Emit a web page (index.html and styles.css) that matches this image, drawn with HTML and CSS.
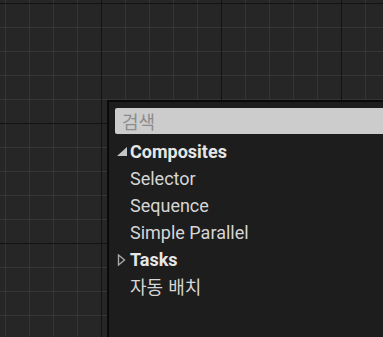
FILE: index.html
```html
<!DOCTYPE html>
<html lang="ko">
<head>
<meta charset="utf-8">
<link rel="stylesheet" href="styles.css">
</head>
<body>
<div class="canvas">
  <div class="menu">
    <div class="search"><span class="placeholder">검색</span></div>
    <ul class="list">
      <li class="row cat">
        <svg class="arrow" width="10" height="10" viewBox="0 0 10 10"><polygon points="10,0 10,9 0,9" fill="#c4c4c4"/></svg>
        <span>Composites</span>
      </li>
      <li class="row item">Selector</li>
      <li class="row item">Sequence</li>
      <li class="row item">Simple Parallel</li>
      <li class="row cat">
        <svg class="arrow" width="10" height="12" viewBox="0 0 10 12"><polygon points="1.5,1 7.5,6 1.5,11" fill="none" stroke="#a8a8a8" stroke-width="1.4"/></svg>
        <span>Tasks</span>
      </li>
      <li class="row item kr">자동 배치</li>
    </ul>
  </div>
</div>
</body>
</html>
```

FILE: styles.css
```css
html, body {
  margin: 0;
  padding: 0;
  width: 383px;
  height: 337px;
  overflow: hidden;
}

.canvas {
  position: relative;
  width: 383px;
  height: 337px;
  overflow: hidden;
  background-color: #262626;
  background-image:
    linear-gradient(to right, #131313 0, #131313 1px, transparent 1px),
    linear-gradient(to bottom, #131313 0, #131313 1px, transparent 1px),
    linear-gradient(to right, #353535 0, #353535 1px, transparent 1px),
    linear-gradient(to bottom, #353535 0, #353535 1px, transparent 1px);
  background-size: 120px 120px, 120px 120px, 24px 24px, 24px 24px;
  background-position: 101px 0, 0 123px, 5px 0, 0 3px;
  font-family: Roboto, "Noto Sans CJK KR", sans-serif;
}

.menu {
  position: absolute;
  left: 107px;
  top: 100px;
  width: 300px;
  height: 260px;
  background: #1d1d1d;
  border: 2px solid #0a0a0a;
  padding: 6px 0 0 6px;
  box-sizing: border-box;
}

.search {
  height: 26px;
  background: #cccccc;
  border-radius: 2px;
  display: flex;
  align-items: center;
  padding-left: 7px;
}

.placeholder {
  font-family: "Noto Sans CJK KR", sans-serif;
  font-size: 18px;
  color: #8c8c8c;
  line-height: 1;
}

.list {
  list-style: none;
  margin: 4px 0 0 0;
  padding: 0;
}

.row {
  height: 27px;
  line-height: 27px;
  font-size: 18px;
  color: #d6d6d6;
  display: flex;
  align-items: center;
  white-space: nowrap;
}

.cat {
  font-weight: bold;
  color: #e6e6e6;
  padding-left: 2px;
}

.arrow {
  width: 10px;
  margin-right: 3px;
  flex: none;
}

.item {
  padding-left: 15px;
}

.kr {
  font-family: "Noto Sans CJK KR", sans-serif;
}
```
